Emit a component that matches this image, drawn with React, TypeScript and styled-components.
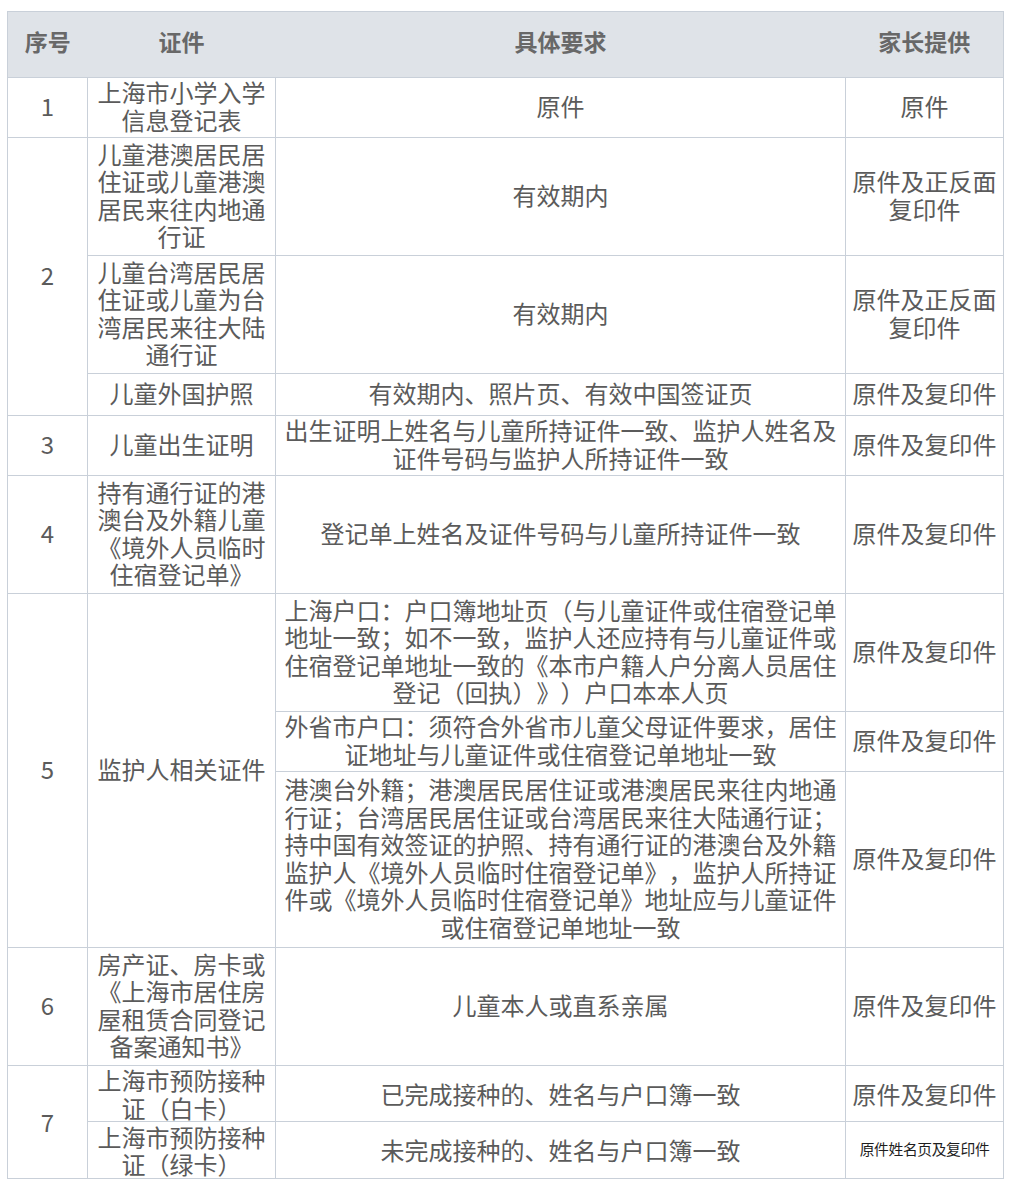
import React from "react";
import styled, { createGlobalStyle } from "styled-components";

const GlobalStyle = createGlobalStyle`
  html, body {
    margin: 0;
    padding: 0;
    background: #ffffff;
  }
  body {
    font-family: "Noto Sans CJK SC", "Noto Sans", sans-serif;
  }
`;

const Page = styled.div`
  padding: 11px 0 0 7px;
  width: 1012px;
  box-sizing: border-box;
`;

const Table = styled.table`
  width: 996px;
  table-layout: fixed;
  border-collapse: collapse;
  border: 1px solid #c9d0d9;
  color: #5b5b5b;
  font-size: 24px;
  line-height: 27.6px;
  text-spacing-trim: space-all;
`;

const HeadRow = styled.tr`
  height: 66px;
  background: #dfe3e8;
`;

const HeadCell = styled.th`
  padding: 0 0 6px;
  font-weight: 700;
  font-size: 23px;
  color: #686868;
  text-align: center;
  border-bottom: 1px solid #c9d0d9;
`;

const Row = styled.tr<{ $h: number }>`
  height: ${(p) => p.$h}px;
`;

const Cell = styled.td<{ $flush?: boolean }>`
  padding: ${(p) => (p.$flush ? "0 5px" : "0 5px 3.5px")};
  border: 1px solid #c9d0d9;
  text-align: center;
  vertical-align: middle;
  white-space: nowrap;
`;

const NoteCell = styled.td`
  padding: 0 4px 2px;
  border: 1px solid #c9d0d9;
  background: #ffffff;
  text-align: center;
  vertical-align: middle;
  white-space: nowrap;
  font-size: 14.8px;
  line-height: 18px;
  letter-spacing: -0.4px;
  color: #1e1e1e;
`;

const Lines: React.FC<{ t: string[] }> = ({ t }) => (
  <>
    {t.map((l, i) => (
      <React.Fragment key={i}>
        {i > 0 && <br />}
        {l}
      </React.Fragment>
    ))}
  </>
);

const COPY = ["原件及复印件"];

export default function App() {
  return (
    <Page>
      <GlobalStyle />
      <Table>
        <colgroup>
          <col style={{ width: 80 }} />
          <col style={{ width: 188 }} />
          <col style={{ width: 570 }} />
          <col style={{ width: 158 }} />
        </colgroup>
        <thead>
          <HeadRow>
            <HeadCell>序号</HeadCell>
            <HeadCell>证件</HeadCell>
            <HeadCell>具体要求</HeadCell>
            <HeadCell>家长提供</HeadCell>
          </HeadRow>
        </thead>
        <tbody>
          <Row $h={60}>
            <Cell>1</Cell>
            <Cell>
              <Lines t={["上海市小学入学", "信息登记表"]} />
            </Cell>
            <Cell>原件</Cell>
            <Cell>原件</Cell>
          </Row>
          <Row $h={118}>
            <Cell rowSpan={3}>2</Cell>
            <Cell>
              <Lines t={["儿童港澳居民居", "住证或儿童港澳", "居民来往内地通", "行证"]} />
            </Cell>
            <Cell>有效期内</Cell>
            <Cell>
              <Lines t={["原件及正反面", "复印件"]} />
            </Cell>
          </Row>
          <Row $h={118}>
            <Cell>
              <Lines t={["儿童台湾居民居", "住证或儿童为台", "湾居民来往大陆", "通行证"]} />
            </Cell>
            <Cell>有效期内</Cell>
            <Cell>
              <Lines t={["原件及正反面", "复印件"]} />
            </Cell>
          </Row>
          <Row $h={42}>
            <Cell>儿童外国护照</Cell>
            <Cell>有效期内、照片页、有效中国签证页</Cell>
            <Cell>
              <Lines t={COPY} />
            </Cell>
          </Row>
          <Row $h={60}>
            <Cell>3</Cell>
            <Cell>儿童出生证明</Cell>
            <Cell>
              <Lines t={["出生证明上姓名与儿童所持证件一致、监护人姓名及", "证件号码与监护人所持证件一致"]} />
            </Cell>
            <Cell>
              <Lines t={COPY} />
            </Cell>
          </Row>
          <Row $h={118}>
            <Cell>4</Cell>
            <Cell>
              <Lines t={["持有通行证的港", "澳台及外籍儿童", "《境外人员临时", "住宿登记单》"]} />
            </Cell>
            <Cell>登记单上姓名及证件号码与儿童所持证件一致</Cell>
            <Cell>
              <Lines t={COPY} />
            </Cell>
          </Row>
          <Row $h={118}>
            <Cell rowSpan={3}>5</Cell>
            <Cell rowSpan={3}>监护人相关证件</Cell>
            <Cell>
              <Lines
                t={[
                  "上海户口：户口簿地址页（与儿童证件或住宿登记单",
                  "地址一致；如不一致，监护人还应持有与儿童证件或",
                  "住宿登记单地址一致的《本市户籍人户分离人员居住",
                  "登记（回执）》）户口本本人页",
                ]}
              />
            </Cell>
            <Cell>
              <Lines t={COPY} />
            </Cell>
          </Row>
          <Row $h={60}>
            <Cell>
              <Lines t={["外省市户口：须符合外省市儿童父母证件要求，居住", "证地址与儿童证件或住宿登记单地址一致"]} />
            </Cell>
            <Cell>
              <Lines t={COPY} />
            </Cell>
          </Row>
          <Row $h={176}>
            <Cell>
              <Lines
                t={[
                  "港澳台外籍；港澳居民居住证或港澳居民来往内地通",
                  "行证；台湾居民居住证或台湾居民来往大陆通行证；",
                  "持中国有效签证的护照、持有通行证的港澳台及外籍",
                  "监护人《境外人员临时住宿登记单》，监护人所持证",
                  "件或《境外人员临时住宿登记单》地址应与儿童证件",
                  "或住宿登记单地址一致",
                ]}
              />
            </Cell>
            <Cell>
              <Lines t={COPY} />
            </Cell>
          </Row>
          <Row $h={118}>
            <Cell>6</Cell>
            <Cell>
              <Lines t={["房产证、房卡或", "《上海市居住房", "屋租赁合同登记", "备案通知书》"]} />
            </Cell>
            <Cell>儿童本人或直系亲属</Cell>
            <Cell>
              <Lines t={COPY} />
            </Cell>
          </Row>
          <Row $h={56}>
            <Cell rowSpan={2} $flush>
              7
            </Cell>
            <Cell $flush>
              <Lines t={["上海市预防接种", "证（白卡）"]} />
            </Cell>
            <Cell $flush>已完成接种的、姓名与户口簿一致</Cell>
            <Cell $flush>
              <Lines t={COPY} />
            </Cell>
          </Row>
          <Row $h={57}>
            <Cell $flush>
              <Lines t={["上海市预防接种", "证（绿卡）"]} />
            </Cell>
            <Cell $flush>未完成接种的、姓名与户口簿一致</Cell>
            <NoteCell>原件姓名页及复印件</NoteCell>
          </Row>
        </tbody>
      </Table>
    </Page>
  );
}
